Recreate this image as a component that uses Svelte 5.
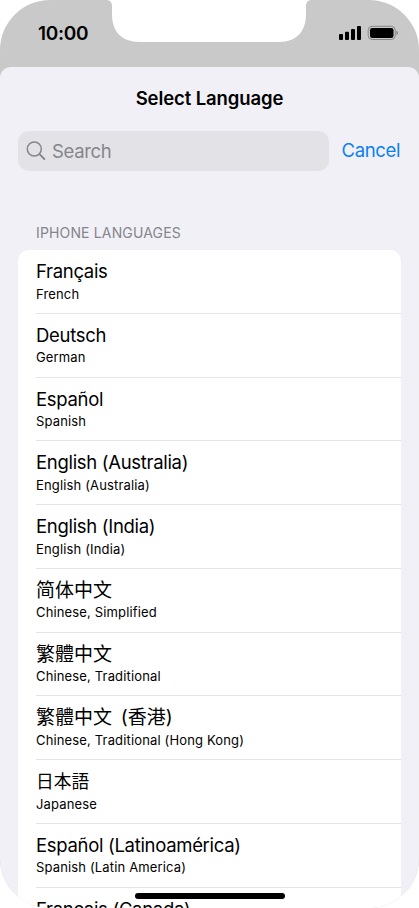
<script lang="ts">
  const languages = [
    { name: 'Français', label: 'French' },
    { name: 'Deutsch', label: 'German' },
    { name: 'Español', label: 'Spanish' },
    { name: 'English (Australia)', label: 'English (Australia)' },
    { name: 'English (India)', label: 'English (India)' },
    { name: '简体中文', label: 'Chinese, Simplified', lang: 'zh-Hans' },
    { name: '繁體中文', label: 'Chinese, Traditional', lang: 'zh-Hant' },
    { name: '繁體中文 (香港)', label: 'Chinese, Traditional (Hong Kong)', lang: 'zh-HK' },
    { name: '日本語', label: 'Japanese', lang: 'ja' },
    { name: 'Español (Latinoamérica)', label: 'Spanish (Latin America)' },
    { name: 'Français (Canada)', label: 'French (Canada)' },
  ];

  let query = $state('');
</script>

<div class="screen">
  <header class="status-bar">
    <svg class="notch" width="206" height="42" viewBox="0 0 206 42">
      <path d="M0 0 C4 0 6 2 6 6 V14 C6 31 15 42 34 42 H173 C191 42 200 31 200 14 V6 C200 2 202 0 206 0 Z" fill="#fff" />
    </svg>
    <span class="time">10:00</span>
    <svg class="indicators" width="60" height="16" viewBox="0 0 60 16">
      <rect x="0" y="9" width="4" height="6" rx="1" />
      <rect x="6" y="6.8" width="4" height="8.2" rx="1" />
      <rect x="12" y="4" width="4" height="11" rx="1" />
      <rect x="18" y="1" width="4" height="14" rx="1" />
      <rect x="29.2" y="1.3" width="27" height="13.2" rx="4" fill="none" stroke="#858585" />
      <rect x="31" y="3" width="23.5" height="10" rx="2.3" />
      <path d="M57.4 5.8 Q59 6.4 59 8 Q59 9.6 57.4 10.2 Z" fill="#858585" />
    </svg>
  </header>

  <main class="sheet">
    <h1>Select Language</h1>
    <div class="search-row">
      <label class="search">
        <svg width="20" height="20" viewBox="0 0 20 20" fill="none" stroke="#85858a" stroke-linecap="round">
          <circle cx="8.3" cy="8" r="7" stroke-width="1.5" />
          <path d="M13.5 13.2 L18.3 18" stroke-width="1.9" />
        </svg>
        <input type="text" placeholder="Search" bind:value={query} />
      </label>
      <button class="cancel" onclick={() => (query = '')}>Cancel</button>
    </div>

    <h2>IPHONE LANGUAGES</h2>
    <ul class="list">
      {#each languages as language}
        <li>
          <span class="name" class:cjk={language.lang} lang={language.lang}>{language.name}</span>
          <span class="label">{language.label}</span>
        </li>
      {/each}
    </ul>
  </main>

  <div class="home-indicator"></div>
</div>

<style>
  :global(body) {
    background: #fff;
    overflow: hidden;
  }

  .screen {
    position: relative;
    width: 419px;
    height: 908px;
    display: flex;
    flex-direction: column;
    overflow: hidden;
    border-radius: 50px;
    background: #c9c9c9;
    color: #000;
    font-family: Inter, 'Noto Sans CJK SC', sans-serif;
  }

  .status-bar {
    box-sizing: border-box;
    height: 67px;
    flex: none;
    display: flex;
    justify-content: space-between;
    align-items: flex-start;
    padding: 22px 20px 0 38px;
  }

  .notch {
    position: absolute;
    top: 0;
    left: 106px;
  }

  .time {
    font-size: 19px;
    line-height: 24px;
    font-weight: 600;
    letter-spacing: -0.3px;
  }

  .indicators {
    margin-top: 3px;
  }

  .sheet {
    flex: 1;
    min-height: 0;
    overflow: hidden;
    padding: 0 18px;
    border-radius: 11px 11px 0 0;
    background: #f1f0f6;
  }

  h1 {
    margin: 19px 0 0;
    font-size: 18.5px;
    line-height: 24px;
    font-weight: 600;
    letter-spacing: -0.1px;
    text-align: center;
  }

  .search-row {
    display: flex;
    align-items: center;
    justify-content: space-between;
    margin-top: 21px;
  }

  .search {
    box-sizing: border-box;
    width: 311px;
    height: 40px;
    display: flex;
    align-items: center;
    gap: 6px;
    padding: 0 8px;
    border-radius: 11px;
    background: #e3e2e7;
  }

  .search svg {
    flex: none;
  }

  input {
    flex: 1;
    min-width: 0;
    padding: 0;
    border: none;
    outline: none;
    background: none;
    font: inherit;
    font-size: 18.5px;
    letter-spacing: -0.35px;
  }

  input::placeholder {
    color: #85858a;
    opacity: 1;
  }

  .cancel {
    padding: 0 1px 2px 0;
    border: none;
    background: none;
    color: #087ff5;
    font: inherit;
    font-size: 18.5px;
    letter-spacing: -0.38px;
    cursor: pointer;
  }

  h2 {
    margin: 52px 18px 7px;
    color: #85858a;
    font-size: 14px;
    line-height: 20px;
    font-weight: 400;
    letter-spacing: 0.15px;
  }

  .list {
    margin: 0;
    padding: 0 0 0 18px;
    border-radius: 11px;
    background: #fff;
    list-style: none;
  }

  li {
    box-sizing: border-box;
    height: 63.75px;
    display: flex;
    flex-direction: column;
    padding-top: 8.2px;
    border-bottom: 1px solid #e5e5e7;
  }

  .name {
    height: 26.5px;
    font-size: 18.5px;
    line-height: 26px;
    letter-spacing: -0.31px;
  }

  .cjk {
    font-size: 19px;
    line-height: 28px;
    letter-spacing: 0;
    word-spacing: 3.4px;
  }

  .cjk:lang(ja) {
    font-size: 17.7px;
  }

  .label {
    font-size: 13px;
    line-height: 18px;
    letter-spacing: 0.15px;
  }

  .home-indicator {
    position: absolute;
    left: 135px;
    bottom: 9px;
    width: 150px;
    height: 6px;
    border-radius: 3px;
    background: #000;
  }
</style>
